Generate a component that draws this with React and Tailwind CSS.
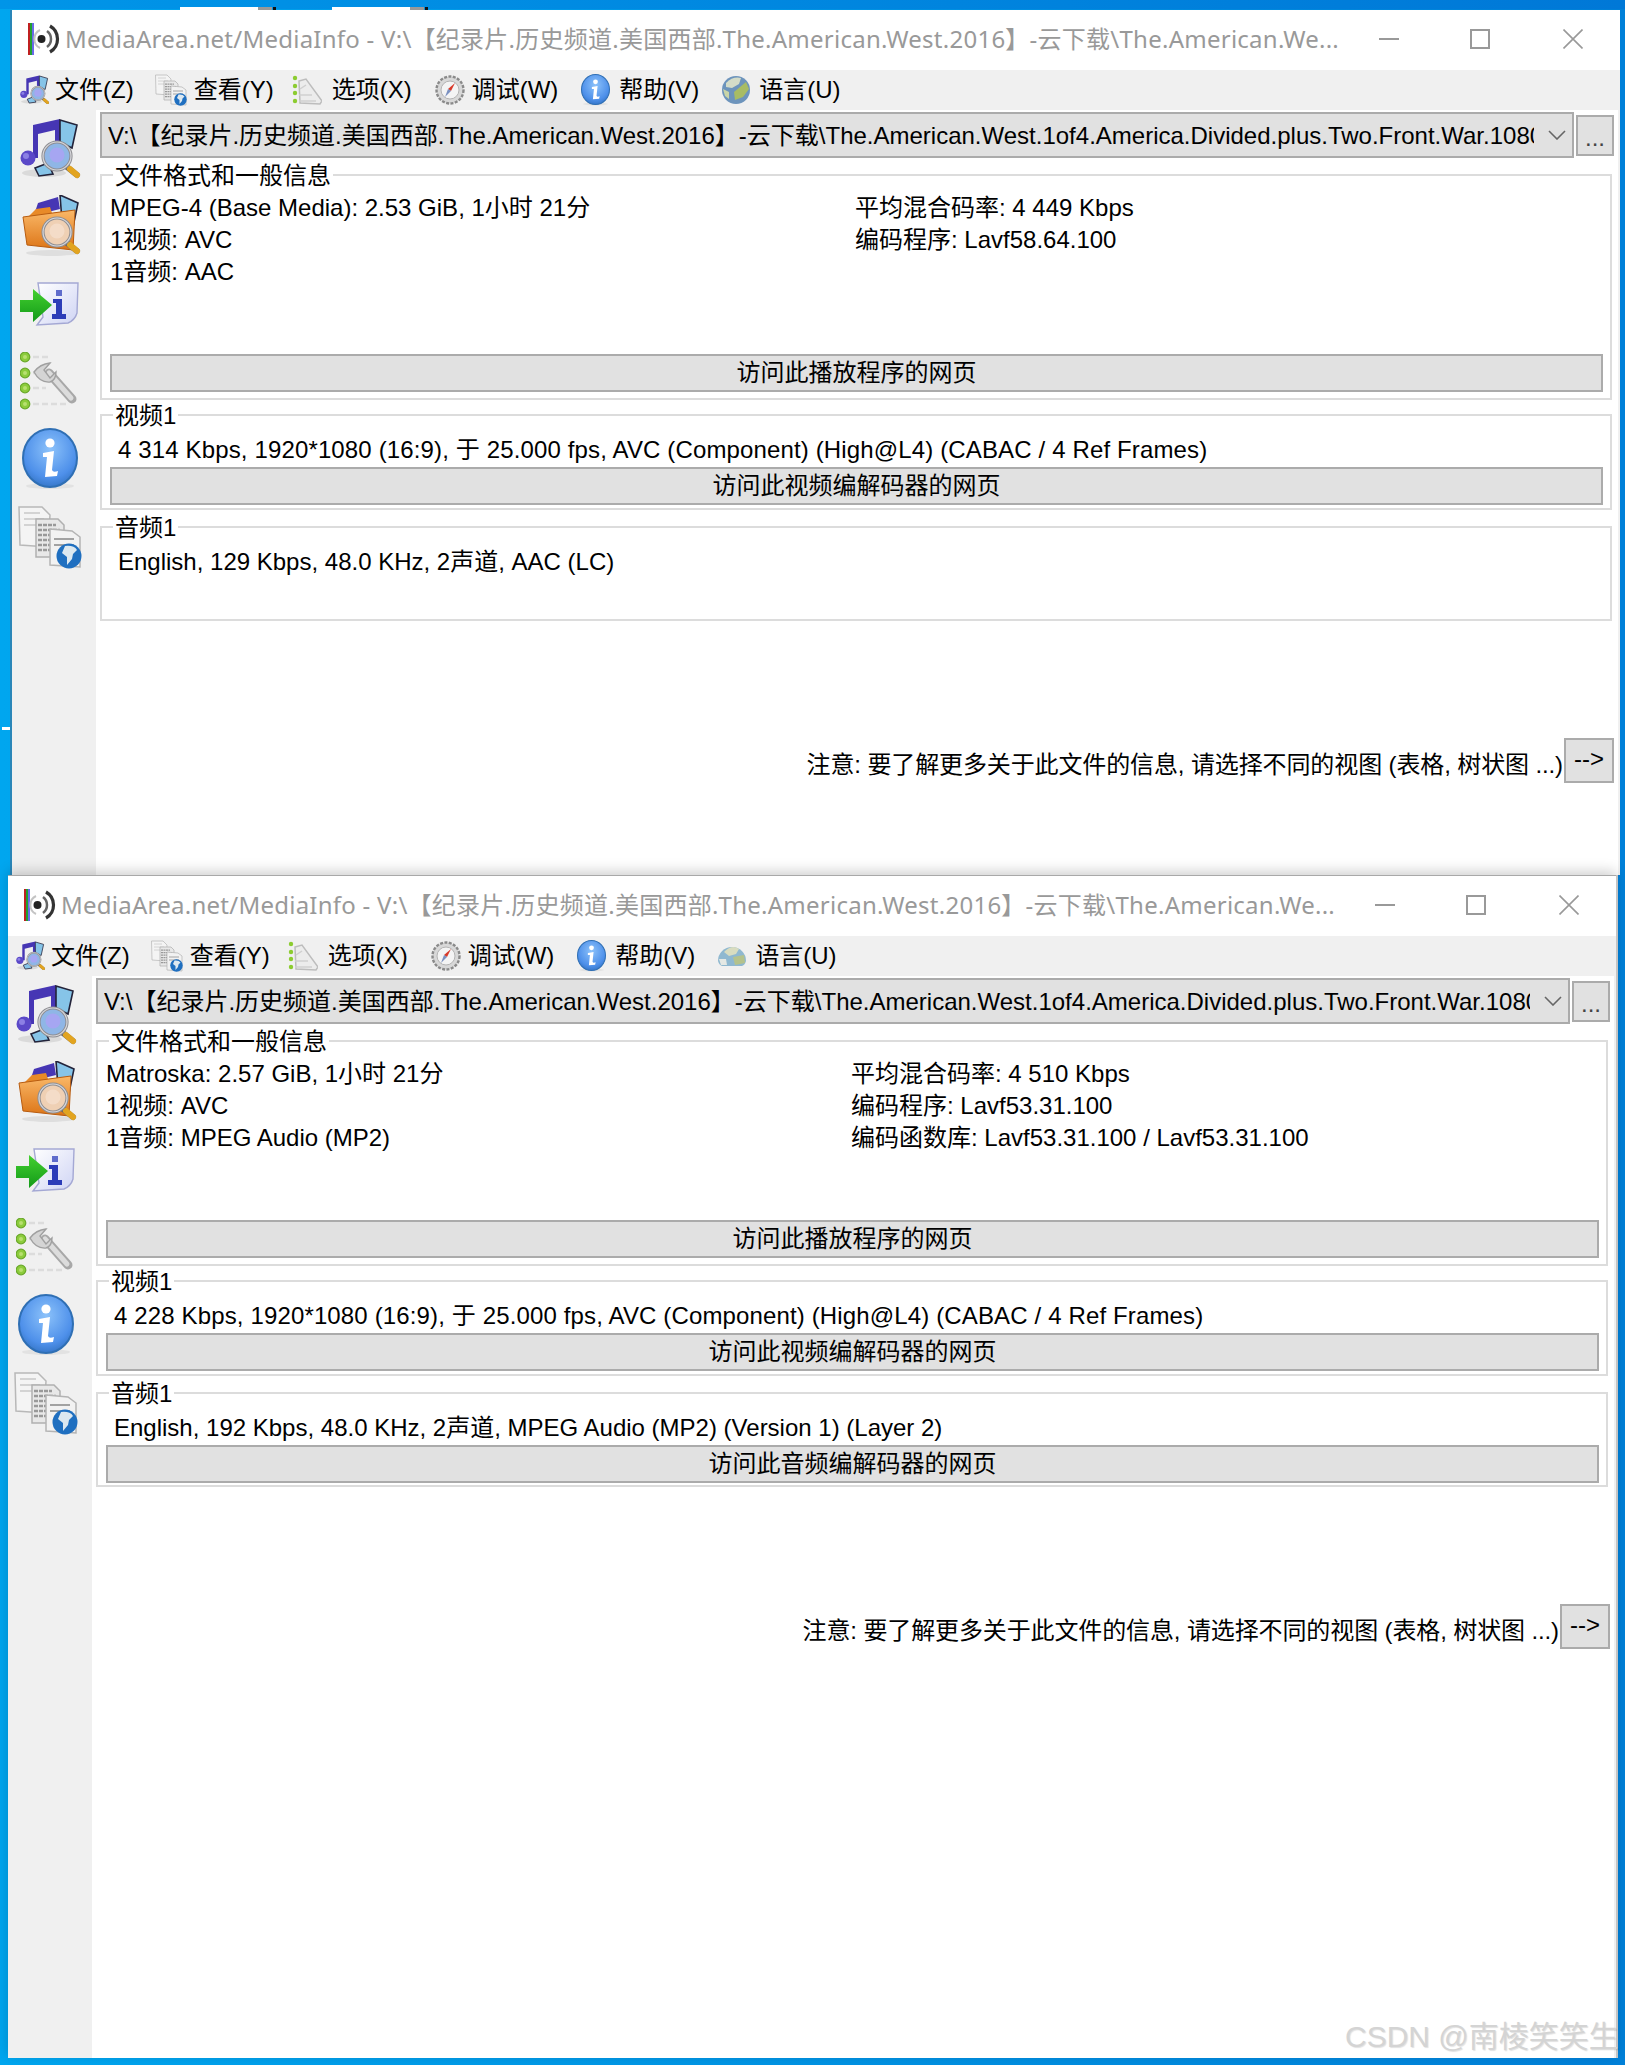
const CJK = "font-['Liberation_Sans','Noto_Sans_CJK_SC',sans-serif]";

function Logo() {
  return (
    <svg width="34" height="32" viewBox="0 0 34 32">
      <rect x="0" y="0" width="2" height="32" fill="#c02020" />
      <rect x="2" y="0" width="2" height="32" fill="#20a030" />
      <rect x="4" y="0" width="2" height="32" fill="#6a6ae8" />
      <circle cx="13.5" cy="16" r="4" fill="#222" />
      <path d="M19 8 A10 10 0 0 1 19 24" fill="none" stroke="#666" strokeWidth="2.5" />
      <path d="M22 3 A15 15 0 0 1 22 29" fill="none" stroke="#333" strokeWidth="3.2" />
      <path d="M12 7 A10 10 0 0 0 12 25" fill="none" stroke="#c4c4c4" strokeWidth="2" />
    </svg>
  );
}

function Magnifier({ lens, core, cx = 37, cy = 38 }) {
  return (
    <g>
      <path d={`M${cx + 10} ${cy + 11} L${cx + 20} ${cy + 19}`} stroke="#666" strokeWidth="6" strokeLinecap="round" />
      <path d={`M${cx + 13} ${cy + 13} L${cx + 20} ${cy + 19}`} stroke="#e2a420" strokeWidth="6" strokeLinecap="round" />
      <circle cx={cx} cy={cy} r="14" fill={lens} stroke="#8e8e92" strokeWidth="3.2" />
      <circle cx={cx} cy={cy} r="14" fill="none" stroke="#d8d8dc" strokeWidth="1.2" />
      <circle cx={cx} cy={cy - 1} r="7.5" fill={core} />
    </g>
  );
}

function Film({ points }) {
  return <polygon points={points} fill="#86c4e8" stroke="#23233a" strokeWidth="1.6" />;
}

function MusicIcon({ s = 62 }) {
  return (
    <svg width={s} height={s} viewBox="0 0 62 62">
      <ellipse cx="24" cy="55" rx="22" ry="4" fill="#dadada" />
      <path d="M13 7 L40 1 L42 40 L35 40 L35 12 L18 16 L18 40 L13 40 Z" fill="#4636b4" />
      <circle cx="8" cy="40" r="7.5" fill="#5b49c8" />
      <circle cx="6" cy="38" r="3" fill="#8c80e4" />
      <Film points="40,2 57,7 52,30 40,24" />
      <Film points="15,50 28,45 33,56 19,58" />
      <Magnifier lens="#8fb6e6" core="#a6a6f2" />
    </svg>
  );
}

function FolderIcon() {
  return (
    <svg width="62" height="64" viewBox="0 0 62 64">
      <defs>
        <linearGradient id="folderFront" x1="0" y1="0" x2="0" y2="1">
          <stop offset="0" stopColor="#fab868" />
          <stop offset="1" stopColor="#dc7416" />
        </linearGradient>
      </defs>
      <ellipse cx="32" cy="58" rx="26" ry="3" fill="#dedede" />
      <path d="M14 20 L18 8 L38 2 L40 14 L24 18 Z" fill="#4636b4" />
      <Film points="40,0 58,8 53,32 42,26" />
      <path d="M8 22 L16 14 L30 12 L32 18 L54 16 L54 30 L8 30 Z" fill="#e88a28" />
      <path d="M3 22 L55 15 L53 55 L7 50 Z" fill="url(#folderFront)" stroke="#b85c10" strokeWidth="1" />
      <Magnifier lens="#efd0b4" core="#f4dcc8" cx={37} cy={37} />
    </svg>
  );
}

function ArrowInfoIcon() {
  return (
    <svg width="60" height="46" viewBox="0 0 60 46">
      <defs>
        <linearGradient id="paper" x1="0" y1="0" x2="1" y2="1">
          <stop offset="0" stopColor="#ffffff" />
          <stop offset="1" stopColor="#cfd4f4" />
        </linearGradient>
        <linearGradient id="greenArrow" x1="0" y1="0" x2="0" y2="1">
          <stop offset="0" stopColor="#44d030" />
          <stop offset="1" stopColor="#129a18" />
        </linearGradient>
      </defs>
      <path d="M18 1 L58 1 L57 31 Q55 38 48 41 L17 43 L23 35 Z" fill="url(#paper)" stroke="#a4a8d4" strokeWidth="1.4" />
      <rect x="36" y="8" width="6" height="6" fill="#5f6ccc" />
      <path d="M33 17 L42 17 L42 32 L46 32 L46 37 L32 37 L32 32 L36 32 L36 21 L33 21 Z" fill="#2c3cb8" />
      <path d="M0 18 L13 18 L13 7 L32 23 L13 40 L13 30 L0 30 Z" fill="url(#greenArrow)" />
    </svg>
  );
}

function WrenchIcon() {
  return (
    <svg width="60" height="58" viewBox="0 0 60 58">
      {[5, 21, 36, 52].map((y, i) => (
        <g key={i}>
          <path d={`M13 ${y} H${[30, 24, 26, 48][i]}`} stroke="#dcdcdc" strokeWidth="2.5" strokeDasharray="6 3" />
          <circle cx="5" cy={y} r="4.8" fill="#8ccc3c" stroke="#6aa82a" strokeWidth="1.2" />
          <circle cx="5" cy={y} r="2" fill="#b8e070" />
        </g>
      ))}
      <path d="M29 21 L52 47" stroke="#a8a8a8" strokeWidth="9" strokeLinecap="round" />
      <path d="M29 21 L51 46" stroke="#dcdcdc" strokeWidth="5" strokeLinecap="round" />
      <path d="M14 20 Q20 12 30 11 L24 18 L30 26 L36 20 Q36 28 30 30 Q20 31 14 20 Z" fill="#d4d4d4" stroke="#a0a0a0" strokeWidth="1.4" />
    </svg>
  );
}

function InfoIcon({ s = 56 }) {
  return (
    <svg width={s} height={(s * 62) / 56} viewBox="0 0 56 62">
      <defs>
        <radialGradient id="infoBall" cx="0.5" cy="0.35" r="0.7">
          <stop offset="0" stopColor="#8cc2fa" />
          <stop offset="0.7" stopColor="#4e90ea" />
          <stop offset="1" stopColor="#3070c0" />
        </radialGradient>
      </defs>
      <ellipse cx="28" cy="58" rx="24" ry="3" fill="#e2e2e2" />
      <ellipse cx="28" cy="30" rx="27" ry="29" fill="url(#infoBall)" stroke="#2f6fb4" strokeWidth="2" />
      <circle cx="28" cy="15" r="4.6" fill="#fff" />
      <path d="M21 25 L32 23 L30 42 Q31 45 36 43 L35 48 L23 49 L25 29 L21 29 Z" fill="#fff" />
    </svg>
  );
}

function DocsIcon({ s = 66 }) {
  return (
    <svg width={s} height={s} viewBox="0 0 66 66">
      <path d="M1 2 L24 2 L32 10 L30 42 L2 40 Z" fill="#f4f4f4" stroke="#b8b8b8" strokeWidth="1.5" />
      <path d="M6 8 H22 M6 14 H26 M6 20 H18" stroke="#c8c8c8" strokeWidth="1.5" />
      <path d="M18 14 L40 14 L46 20 L46 52 L18 52 Z" fill="#e8e8e8" stroke="#b0b0b0" strokeWidth="1.5" />
      <path d="M20 20 H38 M20 25 H42 M20 30 H42 M20 35 H42 M20 40 H42 M20 45 H42" stroke="#999" strokeWidth="2.5" strokeDasharray="4 1" />
      <path d="M32 24 L54 26 L62 32 L62 62 L32 60 Z" fill="#f2f2f2" stroke="#b4b4b4" strokeWidth="1.5" />
      <path d="M36 34 H56 M36 40 H56" stroke="#888" strokeWidth="1.5" />
      <circle cx="51" cy="51" r="12.5" fill="#1f6fc0" />
      <path d="M47 41 Q56 40 59 45 L55 49 L54 54 L49 60 L49 52 L44 48 Z" fill="#dce8f0" />
    </svg>
  );
}

function SmallWrench() {
  return (
    <svg width="30" height="30" viewBox="0 0 30 30">
      {[3, 11, 18, 26].map((y, i) => (
        <circle key={i} cx="3" cy={y} r="2.2" fill="#8ccc30" />
      ))}
      <path d="M7 6 L14 4 L30 26 L28 29 L8 28 Z" fill="#ececec" stroke="#bdbdbd" strokeWidth="1.5" />
      <path d="M8 14 L14 10 M7 20 H20 M7 26 H24" stroke="#cfcfcf" strokeWidth="1.5" />
    </svg>
  );
}

function Compass() {
  return (
    <svg width="30" height="30" viewBox="0 0 30 30">
      <circle cx="15" cy="15" r="13.5" fill="#d8d8d8" stroke="#8a8a8a" strokeWidth="2.4" strokeDasharray="3 1.4" />
      <circle cx="15" cy="15" r="9" fill="#f4f4f4" stroke="#b4b4b4" />
      <path d="M20 8 L16 16 L13 14 Z" fill="#d83a2a" />
      <path d="M10 22 L13 14 L16 16 Z" fill="#7a90c0" />
    </svg>
  );
}

function Globe({ dim }) {
  if (dim) {
    return (
      <svg width="30" height="30" viewBox="0 0 30 30">
        <path d="M1 20 A14 14 0 0 1 29 20 Q28 24 25 25 L5 25 Q2 24 1 20 Z" fill="#8fb8d0" />
        <path d="M7 11 Q15 3 22 8 L19 13 L12 15 Z" fill="#d8dcc0" />
        <path d="M16 16 L27 14 L28 22 L18 24 Z" fill="#b4c28c" />
        <path d="M2 18 L9 18 L10 24 L4 24 Z" fill="#e4e8e4" />
      </svg>
    );
  }
  return (
    <svg width="30" height="30" viewBox="0 0 30 30">
      <circle cx="15" cy="15" r="14" fill="#6d94bc" />
      <path d="M5 8 Q12 1 20 3 L18 9 L11 13 L5 12 Z" fill="#d4dcc8" />
      <path d="M13 17 L25 7 L28 14 L22 22 L14 25 Z" fill="#a8bc64" />
      <path d="M2 14 L8 17 L8 24 L4 21 Z" fill="#c8d4a8" />
    </svg>
  );
}

function MenuBar({ dim }) {
  const items = [
    { icon: <MusicIcon s={30} />, label: "文件(Z)", cls: "ml-[8px] gap-[5px]" },
    { icon: <DocsIcon s={33} />, label: "查看(Y)", cls: "ml-[21px] gap-[6px]" },
    { icon: <SmallWrench />, label: "选项(X)", cls: "ml-[18px] gap-[10px]" },
    { icon: <Compass />, label: "调试(W)", cls: "ml-[23px] gap-[7px]" },
    { icon: <InfoIcon s={29} />, label: "帮助(V)", cls: "ml-[23px] gap-[9px]" },
    { icon: <Globe dim={dim} />, label: "语言(U)", cls: "ml-[22px] gap-[8px]" },
  ];
  return (
    <div className="flex h-[40px] items-center bg-[#f0f0f0]">
      {items.map((it) => (
        <div key={it.label} className={`flex items-center ${it.cls}`}>
          {it.icon}
          <span className="text-[24px] leading-[32px] text-black whitespace-nowrap">{it.label}</span>
        </div>
      ))}
    </div>
  );
}

function Button({ children, className = "" }) {
  return (
    <div className={`flex items-center justify-center border-2 border-[#ababab] bg-[#e1e1e1] text-[24px] leading-[32px] text-black ${className}`}>
      {children}
    </div>
  );
}

function Group({ title, className, children }) {
  return (
    <div className={`relative border-2 border-[#dcdcdc] ${className}`}>
      <div className="absolute left-[11px] top-[-15px] bg-white px-[2px] text-[24px] leading-[30px] text-black whitespace-nowrap">
        {title}
      </div>
      {children}
    </div>
  );
}

function Side() {
  return (
    <div className="flex w-[84px] shrink-0 flex-col items-start bg-[#f0f0f0] pl-[8px] pt-[8px]">
      <MusicIcon />
      <div className="mt-[15px]"><FolderIcon /></div>
      <div className="mt-[23px]"><ArrowInfoIcon /></div>
      <div className="mt-[24px]"><WrenchIcon /></div>
      <div className="ml-[2px] mt-[18px]"><InfoIcon /></div>
      <div className="-ml-[2px] mt-[15px]"><DocsIcon /></div>
    </div>
  );
}

function Wnd({ className, stats, right, video, audio, audioButton, dim }) {
  const path = "V:\\【纪录片.历史频道.美国西部.The.American.West.2016】-云下载\\The.American.West.1of4.America.Divided.plus.Two.Front.War.1080p.BluRay.mkv";
  return (
    <div className={`absolute flex flex-col bg-white ${CJK} ${className}`}>
      <div className="flex h-[60px] shrink-0 items-center bg-white pb-[2px] pl-[16px]">
        <Logo />
        <div className="ml-[3px] w-[1281px] whitespace-nowrap font-['Noto_Sans','Noto_Sans_CJK_SC',sans-serif] text-[24px] tracking-[0.25px] text-[#999999]">
          MediaArea.net/MediaInfo - V:\【纪录片.历史频道.美国西部.The.American.West.2016】-云下载\The.American.We...
        </div>
        <div className="ml-[33px] h-[2px] w-[20px] bg-[#999999]" />
        <div className="ml-[71px] h-[20px] w-[20px] border-2 border-[#999999]" />
        <svg className="ml-[73px]" width="20" height="20" viewBox="0 0 20 20">
          <path d="M0.5 0.5 L19.5 19.5 M19.5 0.5 L0.5 19.5" stroke="#999999" strokeWidth="1.6" />
        </svg>
      </div>
      <MenuBar dim={dim} />
      <div className="flex min-h-0 flex-1">
        <Side />
        <div className="min-w-0 flex-1 border-r-2 border-[#f0f0f0] pl-[4px] pr-[6px]">
          <div className="mt-[2px] flex items-center gap-[2px]">
            <div className="flex h-[46px] w-[1474px] shrink-0 items-center border-2 border-[#ababab] bg-[#e1e1e1] pl-[6px] pr-[6px]">
              <div className="min-w-0 flex-1 overflow-hidden whitespace-nowrap pt-[1px] text-[24px] leading-[32px] text-black">{path}</div>
              <svg className="ml-[14px] shrink-0" width="18" height="10" viewBox="0 0 18 10">
                <path d="M1 1 L9 9 L17 1" fill="none" stroke="#666" strokeWidth="1.6" />
              </svg>
            </div>
            <Button className="h-[41px] w-[38px] shrink-0">
              <span className="relative top-[3px] text-[#444]">...</span>
            </Button>
          </div>
          <Group title="文件格式和一般信息" className="mt-[16px] h-[226px]">
            <div className="grid grid-cols-[745px_1fr] pl-[8px] pt-[16px] text-[24px] leading-[32px] text-black">
              <div>{stats.map((s) => <div key={s}>{s}</div>)}</div>
              <div>{right.map((s) => <div key={s}>{s}</div>)}</div>
            </div>
            <Button className="absolute bottom-[6px] left-[8px] h-[38px] w-[1493px]">访问此播放程序的网页</Button>
          </Group>
          <Group title="视频1" className="mt-[14px] h-[96px]">
            <div className="pl-[16px] pt-[18px] text-[24px] leading-[32px] tracking-[0.14px] text-black whitespace-nowrap">{video}</div>
            <Button className="absolute bottom-[3px] left-[8px] h-[38px] w-[1493px]">访问此视频编解码器的网页</Button>
          </Group>
          <Group title="音频1" className="mt-[16px] h-[95px]">
            <div className="pl-[16px] pt-[18px] text-[24px] leading-[32px] text-black whitespace-nowrap">{audio}</div>
            {audioButton && (
              <Button className="absolute bottom-[2px] left-[8px] h-[38px] w-[1493px]">访问此音频编解码器的网页</Button>
            )}
          </Group>
          <div className="-mr-[2px] mt-[117px] flex items-start justify-end">
            <span className="mr-[1px] mt-[11px] text-[24px] leading-[32px] tracking-[-0.12px] text-black whitespace-nowrap">
              注意: 要了解更多关于此文件的信息, 请选择不同的视图 (表格, 树状图 ...)
            </span>
            <Button className="h-[45px] w-[50px] pb-[3px]">--&gt;</Button>
          </div>
        </div>
      </div>
    </div>
  );
}

export default function App() {
  return (
    <div className="relative h-[2065px] w-[1625px] overflow-hidden bg-gradient-to-r from-[#00a6ef] to-[#0080d8]">
      <div className="absolute left-0 top-0 h-[9px] w-full bg-gradient-to-r from-[#0095e8] to-[#0078d7]" />
      <div className="absolute left-[180px] top-[7px] h-[3px] w-[78px] bg-white" />
      <div className="absolute left-[258px] top-[7px] h-[3px] w-[14px] bg-[#999999]" />
      <div className="absolute left-[273px] top-[7px] h-[3px] w-[3px] bg-[#111111]" />
      <div className="absolute left-[332px] top-[7px] h-[3px] w-[78px] bg-white" />
      <div className="absolute left-[410px] top-[7px] h-[3px] w-[14px] bg-[#999999]" />
      <div className="absolute left-[425px] top-[7px] h-[3px] w-[3px] bg-[#111111]" />
      <div className="absolute left-[2px] top-[727px] h-[3px] w-[10px] bg-white" />
      <div className="absolute left-[10px] top-[10px] h-[870px] w-[2px] bg-[#2a86b8]" />
      <Wnd
        className="left-[12px] top-[10px] h-[865px] w-[1608px]"
        stats={["MPEG-4 (Base Media): 2.53 GiB, 1小时 21分", "1视频: AVC", "1音频: AAC"]}
        right={["平均混合码率: 4 449 Kbps", "编码程序: Lavf58.64.100"]}
        video="4 314 Kbps, 1920*1080 (16:9), 于 25.000 fps, AVC (Component) (High@L4) (CABAC / 4 Ref Frames)"
        audio="English, 129 Kbps, 48.0 KHz, 2声道, AAC (LC)"
      />
      <Wnd
        className="left-[8px] top-[875px] h-[1183px] w-[1608px] border-t border-[#a8a8a8] shadow-[2px_0_0_#c4c4c4,0_-4px_12px_rgba(0,0,0,0.18)]"
        stats={["Matroska: 2.57 GiB, 1小时 21分", "1视频: AVC", "1音频: MPEG Audio (MP2)"]}
        right={["平均混合码率: 4 510 Kbps", "编码程序: Lavf53.31.100", "编码函数库: Lavf53.31.100 / Lavf53.31.100"]}
        video="4 228 Kbps, 1920*1080 (16:9), 于 25.000 fps, AVC (Component) (High@L4) (CABAC / 4 Ref Frames)"
        audio="English, 192 Kbps, 48.0 KHz, 2声道, MPEG Audio (MP2) (Version 1) (Layer 2)"
        audioButton
        dim
      />
      <div className={`absolute left-[1345px] top-[2016px] text-[30px] leading-[42px] text-[#d4d4d4] whitespace-nowrap ${CJK} [text-shadow:1px_1px_1px_rgba(0,0,0,0.12)]`}>
        CSDN @南棱笑笑生
      </div>
    </div>
  );
}
